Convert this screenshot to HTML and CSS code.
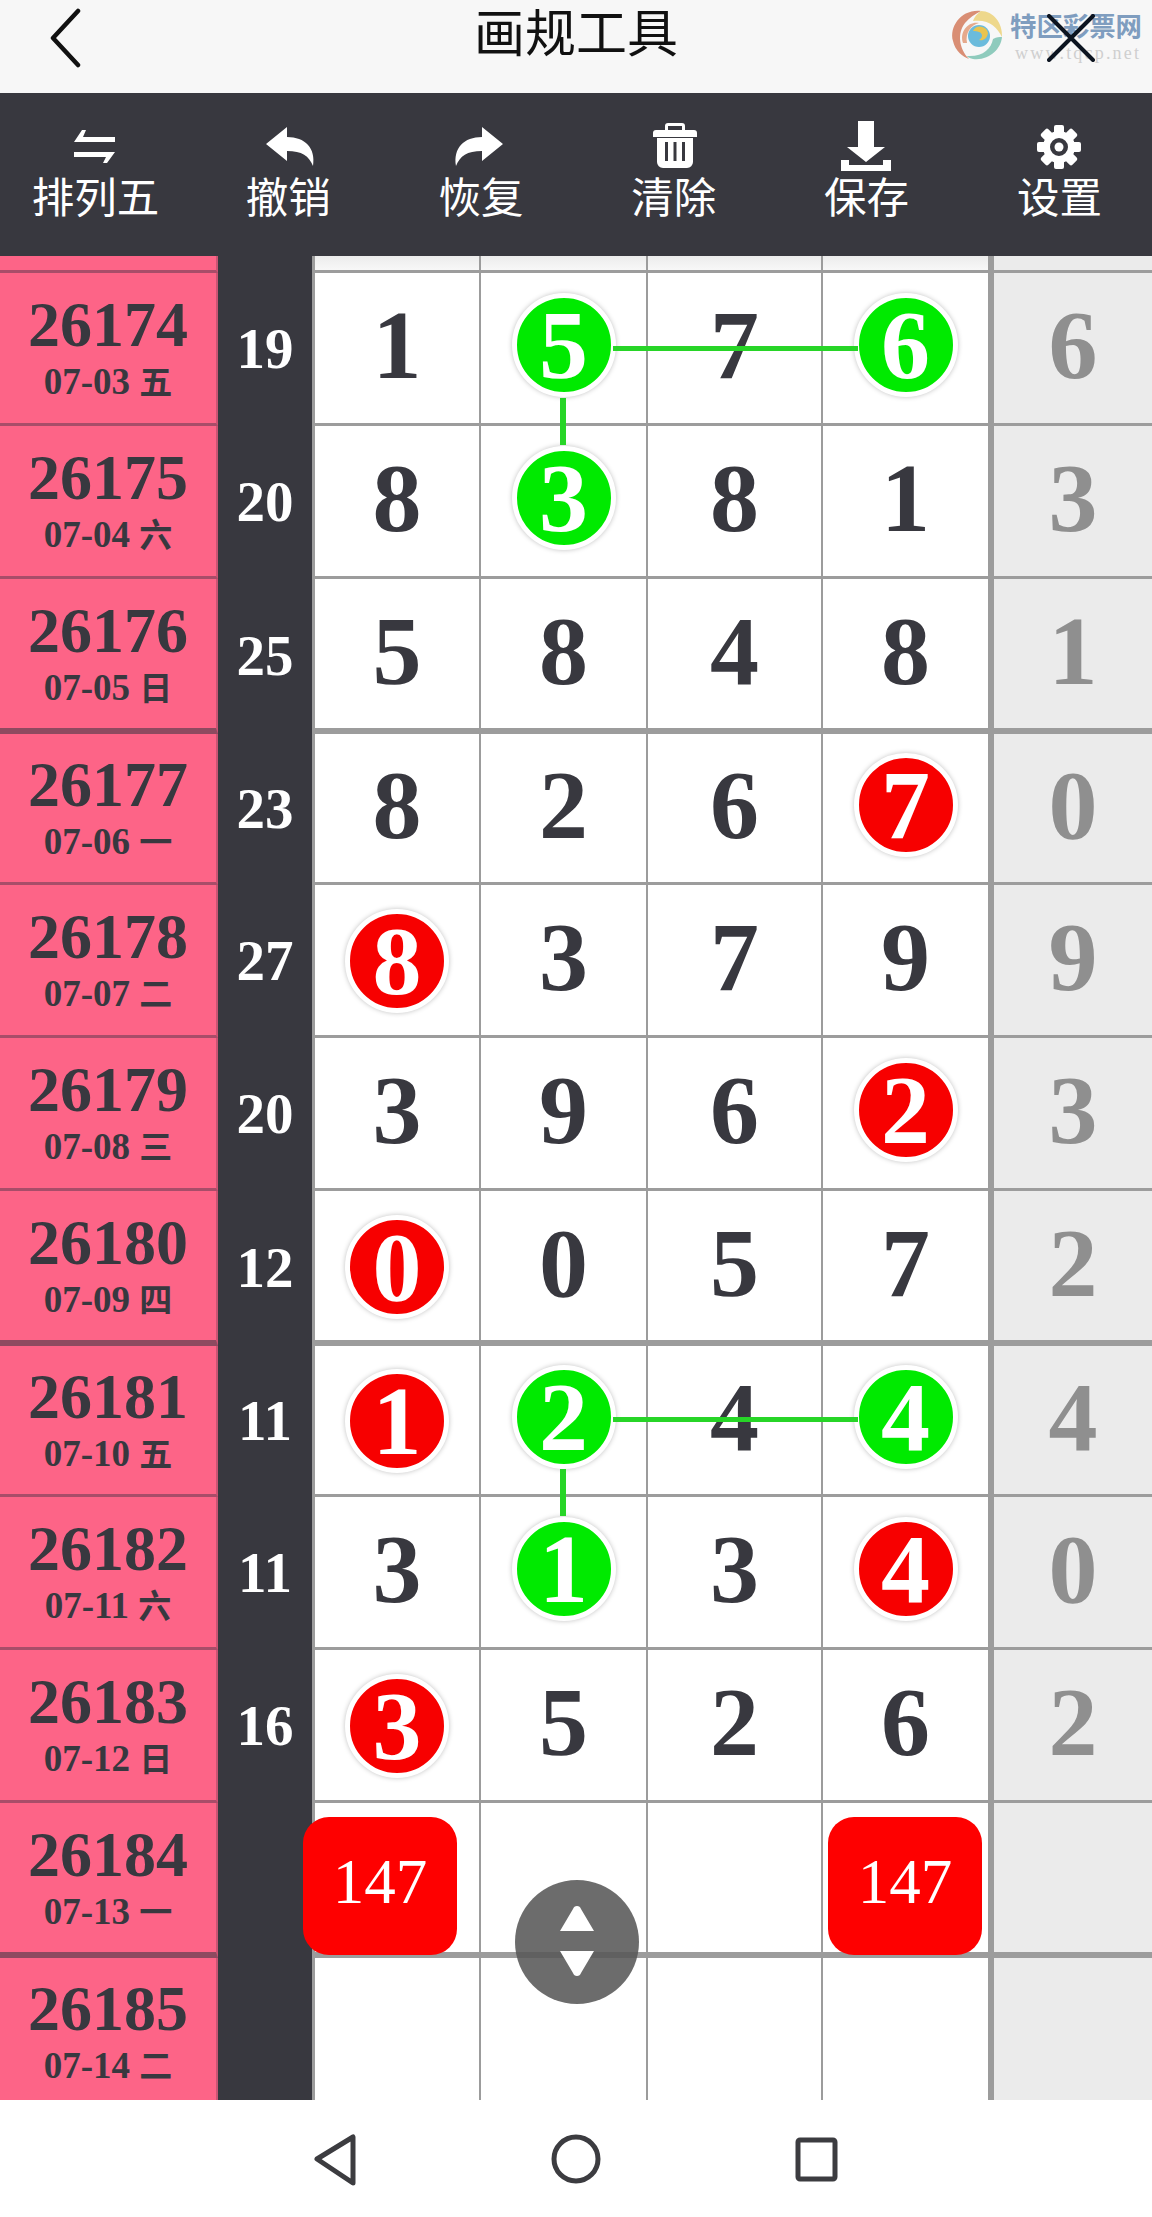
FILE: index.html
```html
<!DOCTYPE html>
<html lang="zh">
  <head>
    <meta charset="utf-8">
    <title>画规工具</title>
    <link rel="stylesheet" href="styles.css">
  </head>
  <body>
    <div class="top_bar">
      <svg class="back_icon" viewBox="0 0 40 60"><path d="M32 3 L7 30 L32 57" /></svg>
      <h1 class="title">画规工具</h1>
      <div class="logo">
        <svg class="swirl" viewBox="0 0 56 56">
          <path fill="#d98e74" d="M32 4 C12 2 0 20 4 34 C6 44 14 50 20 52 C10 42 8 26 16 16 C20 11 26 7 32 4 Z" />
          <path fill="#eed88c" d="M32 4 C44 4 54 16 53 30 C48 20 40 12 24 14 C26 9 28 7 32 4 Z" />
          <path fill="#8fcbbd" d="M53 30 C52 42 40 54 24 52 C20 51 18 50 18 49 C34 50 42 42 44 32 C48 30 50 30 53 30 Z" />
          <path fill="#e5a98c" d="M14 36 C10 24 20 14 30 16 C22 18 16 26 18 36 Z" />
          <circle cx="30" cy="29" r="11" fill="#6bbbdc" />
          <path fill="#e9c44f" d="M24 24 A8 8 0 0 1 39 26 C38 32 34 34 30 33 C34 31 34 26 30 25 C28 24 26 24 24 24 Z" />
        </svg>
        <div class="logo_text">
          <span class="logo_name">特区彩票网</span>
          <span class="logo_url">www.tqcp.net</span>
        </div>
        <svg class="close_icon" viewBox="0 0 48 48"><path d="M2 2 L46 46 M46 2 L2 46" /></svg>
      </div>
    </div>

    <div class="tool_bar">
      <div class="tool">
        <svg viewBox="0 0 60 52"><path d="M9 22 L17 10 H21 L18 17 H50 V22 Z M9 32 H50 L42 43 H38 L41 37 H9 Z" /></svg>
        <span>排列五</span>
      </div>
      <div class="tool">
        <svg viewBox="0 0 60 52"><path d="M8 24 L29 7 V17 C47 17 58 28 55 46 C51 36 44 31 29 31 V41 Z" /></svg>
        <span>撤销</span>
      </div>
      <div class="tool">
        <svg viewBox="0 0 60 52"><path transform="translate(60 0) scale(-1 1)" d="M8 24 L29 7 V17 C47 17 58 28 55 46 C51 36 44 31 29 31 V41 Z" /></svg>
        <span>恢复</span>
      </div>
      <div class="tool">
        <svg viewBox="0 0 60 52">
          <path fill-rule="evenodd" d="M21 10 V6 A3 3 0 0 1 24 3 H38 A3 3 0 0 1 41 6 V10 H50 A3 3 0 0 1 53 13 V17 H9 V13 A3 3 0 0 1 12 10 Z M24 10 H38 V6 H24 Z" />
          <path fill-rule="evenodd" d="M13 18 H49 V42 A6 6 0 0 1 43 48 H19 A6 6 0 0 1 13 42 Z M21 22 V41 H24 V22 Z M29.5 22 V41 H32.5 V22 Z M38 22 V41 H41 V22 Z" />
        </svg>
        <span>清除</span>
      </div>
      <div class="tool">
        <svg viewBox="0 0 60 52"><path d="M21 1 H37 V27 H48 L29 42 L10 27 H21 Z M4 40 H12 V45 H46 V40 H54 V51 H4 Z" /></svg>
        <span>保存</span>
      </div>
      <div class="tool">
        <svg viewBox="0 0 60 52">
          <path fill-rule="evenodd" d="M30 11 A16 16 0 1 0 30 43 A16 16 0 1 0 30 11 Z M30 18 A9 9 0 1 1 30 36 A9 9 0 1 1 30 18 Z" />
          <circle cx="30" cy="27" r="4.5" />
          <rect x="25" y="5" width="10" height="9" rx="2" />
          <rect x="25" y="40" width="10" height="9" rx="2" />
          <rect x="8" y="22" width="9" height="10" rx="2" />
          <rect x="43" y="22" width="9" height="10" rx="2" />
          <rect x="25" y="5" width="10" height="9" rx="2" transform="rotate(45 30 27)" />
          <rect x="25" y="40" width="10" height="9" rx="2" transform="rotate(45 30 27)" />
          <rect x="25" y="5" width="10" height="9" rx="2" transform="rotate(-45 30 27)" />
          <rect x="25" y="40" width="10" height="9" rx="2" transform="rotate(-45 30 27)" />
        </svg>
        <span>设置</span>
      </div>
    </div>

    <div class="sheet">
      <div class="row head_row">
        <div class="issue"></div><div class="sum"></div><div class="cell"></div><div class="cell"></div><div class="cell"></div><div class="cell"></div><div class="cell last"></div>
      </div>

      <div class="row">
        <div class="issue"><b>26174</b><i>07-03 <em>五</em></i></div><div class="sum">19</div>
        <div class="cell">1</div><div class="cell"><span class="ball green">5</span></div><div class="cell">7</div><div class="cell"><span class="ball green">6</span></div><div class="cell last">6</div>
      </div>
      <div class="row">
        <div class="issue"><b>26175</b><i>07-04 <em>六</em></i></div><div class="sum">20</div>
        <div class="cell">8</div><div class="cell"><span class="ball green">3</span></div><div class="cell">8</div><div class="cell">1</div><div class="cell last">3</div>
      </div>
      <div class="row wide">
        <div class="issue"><b>26176</b><i>07-05 <em>日</em></i></div><div class="sum">25</div>
        <div class="cell">5</div><div class="cell">8</div><div class="cell">4</div><div class="cell">8</div><div class="cell last">1</div>
      </div>
      <div class="row">
        <div class="issue"><b>26177</b><i>07-06 <em>一</em></i></div><div class="sum">23</div>
        <div class="cell">8</div><div class="cell">2</div><div class="cell">6</div><div class="cell"><span class="ball red">7</span></div><div class="cell last">0</div>
      </div>
      <div class="row">
        <div class="issue"><b>26178</b><i>07-07 <em>二</em></i></div><div class="sum">27</div>
        <div class="cell"><span class="ball red">8</span></div><div class="cell">3</div><div class="cell">7</div><div class="cell">9</div><div class="cell last">9</div>
      </div>
      <div class="row">
        <div class="issue"><b>26179</b><i>07-08 <em>三</em></i></div><div class="sum">20</div>
        <div class="cell">3</div><div class="cell">9</div><div class="cell">6</div><div class="cell"><span class="ball red">2</span></div><div class="cell last">3</div>
      </div>
      <div class="row wide">
        <div class="issue"><b>26180</b><i>07-09 <em>四</em></i></div><div class="sum">12</div>
        <div class="cell"><span class="ball red">0</span></div><div class="cell">0</div><div class="cell">5</div><div class="cell">7</div><div class="cell last">2</div>
      </div>
      <div class="row">
        <div class="issue"><b>26181</b><i>07-10 <em>五</em></i></div><div class="sum">11</div>
        <div class="cell"><span class="ball red">1</span></div><div class="cell"><span class="ball green">2</span></div><div class="cell">4</div><div class="cell"><span class="ball green">4</span></div><div class="cell last">4</div>
      </div>
      <div class="row">
        <div class="issue"><b>26182</b><i>07-11 <em>六</em></i></div><div class="sum">11</div>
        <div class="cell">3</div><div class="cell"><span class="ball green">1</span></div><div class="cell">3</div><div class="cell"><span class="ball red">4</span></div><div class="cell last">0</div>
      </div>
      <div class="row">
        <div class="issue"><b>26183</b><i>07-12 <em>日</em></i></div><div class="sum">16</div>
        <div class="cell"><span class="ball red">3</span></div><div class="cell">5</div><div class="cell">2</div><div class="cell">6</div><div class="cell last">2</div>
      </div>
      <div class="row wide">
        <div class="issue"><b>26184</b><i>07-13 <em>一</em></i></div><div class="sum"></div>
        <div class="cell"></div><div class="cell"></div><div class="cell"></div><div class="cell"></div><div class="cell last"></div>
      </div>
      <div class="row">
        <div class="issue"><b>26185</b><i>07-14 <em>二</em></i></div><div class="sum"></div>
        <div class="cell"></div><div class="cell"></div><div class="cell"></div><div class="cell"></div><div class="cell last"></div>
      </div>

      <!-- green connecting lines -->
      <div class="link link_h link_h1"></div>
      <div class="link link_v link_v1"></div>
      <div class="link link_h link_h2"></div>
      <div class="link link_v link_v2"></div>

      <div class="badge badge_left">147</div>
      <div class="badge badge_right">147</div>

      <div class="scroller">
        <svg viewBox="0 0 124 124">
          <path d="M62 26 Q65 26 66 29 L79 51 H45 L58 29 Q59 26 62 26 Z" />
          <path d="M45 71 H79 L66 93 Q65 96 62 96 Q59 96 58 93 Z" />
        </svg>
      </div>
    </div>

    <div class="nav_bar">
      <svg viewBox="0 0 60 60"><path d="M11 30 L47 8 V54 Z" /></svg>
      <svg viewBox="0 0 60 60"><circle cx="30" cy="30" r="22" /></svg>
      <svg viewBox="0 0 60 60"><rect x="12" y="11" width="37" height="39" rx="2" /></svg>
    </div>
  </body>
</html>
```

FILE: styles.css
```css
html, body {
  margin: 0;
  padding: 0;
}
body {
  display: flex;
  flex-direction: column;
  width: 1152px;
  height: 2217px;
  overflow: hidden;
  background-color: white;
  font-family: "Noto Sans CJK SC", "Noto Sans", sans-serif;
}

/* title bar */
.top_bar {
  display: grid;
  grid-template-columns: 1fr auto 1fr;
  align-items: start;
  flex: 0 0 auto;
  height: 93px;
  background-color: #f7f7f7;
}
.back_icon {
  width: 40px;
  height: 60px;
  margin: 8px 0 0 46px;
  fill: none;
  stroke: #111;
  stroke-width: 4.5;
  stroke-linecap: round;
  stroke-linejoin: round;
}
.title {
  margin: 0;
  color: #111;
  font-size: 51px;
  font-weight: 400;
  line-height: 60px;
}
.logo {
  position: relative;
  display: flex;
  justify-self: end;
  gap: 5px;
  margin: 7px 10px 0 0;
}
.swirl {
  width: 56px;
  height: 56px;
}
.logo_text {
  display: flex;
  flex-direction: column;
  width: 132px;
}
.logo_name {
  color: #7f9dbf;
  font-size: 26.4px;
  font-weight: 700;
  line-height: 36px;
  white-space: nowrap;
}
.logo_url {
  padding-left: 5px;
  color: #cfcfcf;
  font-family: "Liberation Serif", serif;
  font-size: 18px;
  letter-spacing: 2.2px;
  line-height: 20px;
  white-space: nowrap;
}
.close_icon {
  position: absolute;
  top: 7px;
  left: 98px;
  width: 48px;
  height: 48px;
  fill: none;
  stroke: #0c1420;
  stroke-width: 4;
  stroke-linecap: round;
}

/* tool bar */
.tool_bar {
  display: grid;
  grid-template-columns: repeat(6, 192.8px);
  flex: 0 0 auto;
  height: 163px;
  margin-left: -1px;
  background-color: #38383f;
}
.tool {
  display: flex;
  flex-direction: column;
  align-items: center;
  padding-top: 27px;
  color: white;
  font-size: 42.5px;
  line-height: 42px;
}
.tool svg {
  width: 60px;
  height: 52px;
  margin-bottom: 2px;
  fill: white;
}

/* number sheet */
.sheet {
  position: relative;
  flex: 0 0 auto;
  height: 1844px;
  overflow: hidden;
}
.row {
  display: grid;
  grid-template-columns: 218px 94px 167px 167px 175px 167px 164px;
  box-sizing: border-box;
  height: 153px;
  color: #38383f;
  font-family: "Liberation Serif", serif;
  font-weight: bold;
}
.head_row {
  height: 17px;
  background: linear-gradient(#ececec, #fafafa);
}
.row.wide {
  height: 155px;
}
.row.wide + .row {
  height: 151px;
}
.issue {
  display: flex;
  flex-direction: column;
  align-items: center;
  justify-content: center;
  border-bottom: 3px solid #a84d69;
  border-right: 2px solid #c95473;
  background-color: #fd6487;
}
.issue b {
  font-size: 64px;
  line-height: 66px;
}
.issue i {
  font-size: 37px;
  font-style: normal;
  line-height: 44px;
  white-space: pre;
}
.issue em {
  font-family: "Noto Sans CJK SC", sans-serif;
  font-size: 33px;
  font-style: normal;
}
.sum {
  display: flex;
  align-items: center;
  justify-content: center;
  padding-bottom: 2px;
  color: white;
  font-size: 57px;
  background-color: #38383f;
}
.cell {
  display: flex;
  align-items: center;
  justify-content: center;
  box-sizing: border-box;
  padding-bottom: 6px;
  border-left: 2px solid #9c9c9c;
  border-bottom: 3px solid #9c9c9c;
  font-size: 98px;
  line-height: 1;
}
.sum + .cell {
  border-left-width: 3px;
}
.cell.last {
  border-left: 6px solid #9c9c9c;
  color: #8f8f8f;
  background-color: #ebebeb;
}
.row.wide .issue {
  border-bottom: 6px solid #8e4a60;
}
.row.wide .cell {
  border-bottom: 6px solid #9c9c9c;
}
.ball {
  display: flex;
  align-items: center;
  justify-content: center;
  flex: 0 0 auto;
  box-sizing: border-box;
  width: 104px;
  height: 104px;
  border: 5px solid white;
  border-radius: 50%;
  box-shadow: 0 0 5px rgba(0, 0, 0, 0.25);
  color: white;
}
.sum + .cell .ball {
  margin-top: 8px;
}
.ball.green {
  background-color: #00ea00;
}
.ball.red {
  background-color: #f70000;
}
.link {
  position: absolute;
  background-color: #27d527;
}
.link_h {
  left: 613px;
  width: 245px;
  height: 5px;
}
.link_v {
  left: 560px;
  width: 6px;
  height: 47px;
}
.link_h1 {
  top: 90px;
}
.link_v1 {
  top: 142px;
}
.link_h2 {
  top: 1161px;
}
.link_v2 {
  top: 1213px;
}
.badge {
  position: absolute;
  top: 1561px;
  display: flex;
  align-items: center;
  justify-content: center;
  box-sizing: border-box;
  width: 154px;
  height: 138px;
  padding-bottom: 8px;
  border-radius: 26px;
  color: white;
  font-family: "Liberation Serif", serif;
  font-size: 63px;
  background-color: #fe0000;
}
.badge_left {
  left: 303px;
}
.badge_right {
  left: 828px;
}
.scroller {
  position: absolute;
  top: 1624px;
  left: 515px;
  width: 124px;
  height: 124px;
  border-radius: 50%;
  background-color: rgba(88, 88, 88, 0.88);
}
.scroller svg {
  display: block;
  width: 124px;
  height: 124px;
  fill: white;
}

/* android buttons */
.nav_bar {
  display: flex;
  align-items: center;
  justify-content: center;
  gap: 180px;
  flex: 0 0 auto;
  height: 117px;
  background-color: white;
}
.nav_bar svg {
  width: 60px;
  height: 60px;
  fill: none;
  stroke: #3c3c40;
  stroke-width: 5;
  stroke-linejoin: round;
}
```
